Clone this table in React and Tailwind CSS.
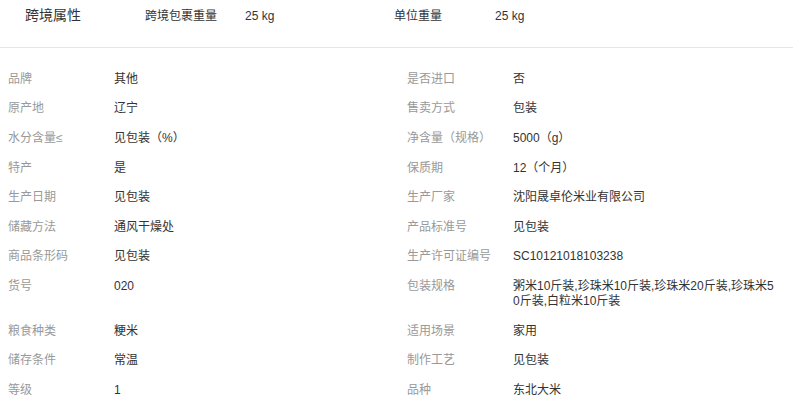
import React from 'react';

const rows = [
  ['品牌', '其他', '是否进口', '否'],
  ['原产地', '辽宁', '售卖方式', '包装'],
  ['水分含量≤', '见包装（%）', '净含量（规格）', '5000（g）'],
  ['特产', '是', '保质期', '12（个月）'],
  ['生产日期', '见包装', '生产厂家', '沈阳晟卓伦米业有限公司'],
  ['储藏方法', '通风干燥处', '产品标准号', '见包装'],
  ['商品条形码', '见包装', '生产许可证编号', 'SC10121018103238'],
  ['货号', '020', '包装规格', '粥米10斤装,珍珠米10斤装,珍珠米20斤装,珍珠米50斤装,白粒米10斤装'],
  ['粮食种类', '粳米', '适用场景', '家用'],
  ['储存条件', '常温', '制作工艺', '见包装'],
  ['等级', '1', '品种', '东北大米'],
];

function Cell({ label, value }) {
  return (
    <div className="flex items-start pl-2 pr-4 py-[7.3px] leading-[15px]">
      <div className="w-[106px] shrink-0 text-[#999]">{label}</div>
      <div className="flex-1 text-[#333] break-all">{value}</div>
    </div>
  );
}

export default function App() {
  return (
    <div
      className="w-[793px] bg-white text-[12px]"
      style={{ fontFamily: '"Liberation Sans", Arial, "Noto Sans CJK SC", sans-serif' }}
    >
      <div className="h-[48px] border-b border-[#e6e6e6]">
        <div className="h-[31px] flex items-center pl-[25px] text-[#333]">
          <div className="w-[120px] text-[14px]">跨境属性</div>
          <div className="w-[100px]">跨境包裹重量</div>
          <div className="w-[149px]">25 kg</div>
          <div className="w-[101px]">单位重量</div>
          <div>25 kg</div>
        </div>
      </div>
      <div className="grid grid-cols-[399px_394px] pt-[16.5px]">
        {rows.map(([l1, v1, l2, v2]) => (
          <React.Fragment key={l1}>
            <Cell label={l1} value={v1} />
            <Cell label={l2} value={v2} />
          </React.Fragment>
        ))}
      </div>
    </div>
  );
}
